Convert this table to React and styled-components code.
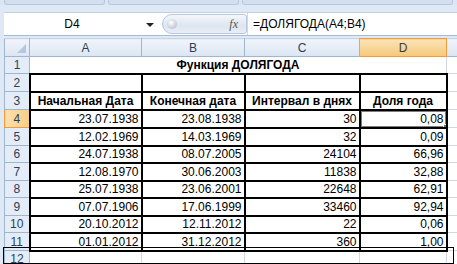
import React from 'react';
import styled, { createGlobalStyle, css } from 'styled-components';

const GlobalStyle = createGlobalStyle`
	html, body {
		margin: 0;
		padding: 0;
		overflow: hidden;
		background: #dfe8f5;
	}
	body {
		font-family: 'Liberation Sans', Arial, sans-serif;
	}
`;

const Window = styled.div`
	position: relative;
	width: 457px;
	height: 264px;
	overflow: hidden;
	background: #dfe8f5;
`;

const RibbonEdge = styled.div`
	display: flex;
	gap: 3px;
	height: 5px;
	padding: 0 4px;
	background: #dbe5f3;
`;

const RibbonGroup = styled.div`
	width: ${(p) => p.w}px;
	height: 4px;
	border: 1px solid #b7c8de;
	border-top: 0;
	border-radius: 0 0 3px 3px;
	background: #d3dfef;
`;

const FormulaBar = styled.div`
	display: flex;
	align-items: center;
	height: 22px;
	margin: 7px 0 2px 4px;
	background: #fff;
	border-top: 1px solid #c3d1e4;
	border-bottom: 1px solid #a9bcd6;
`;

const NameBox = styled.div`
	width: 136px;
	text-align: center;
	font-size: 12px;
	color: #000;
`;

const DropArrow = styled.div`
	width: 0;
	height: 0;
	margin: 1px 8px 0 6px;
	border-left: 4px solid transparent;
	border-right: 4px solid transparent;
	border-top: 4px solid #222;
`;

const FxPill = styled.div`
	display: flex;
	align-items: center;
	justify-content: space-between;
	box-sizing: border-box;
	width: 85px;
	height: 20px;
	padding: 0 8px 0 4px;
	border: 1px solid #b9c7da;
	border-radius: 10px 3px 3px 10px;
	background: linear-gradient(#f4f7fb, #dde5f0 60%, #e9eef5);
`;

const Knob = styled.div`
	width: 10px;
	height: 10px;
	border-radius: 50%;
	background: radial-gradient(circle at 40% 35%, #fff, #c9d0da 60%, #aab3bf);
`;

const Fx = styled.span`
	font-family: 'Liberation Serif', 'Times New Roman', serif;
	font-style: italic;
	font-size: 12px;
	color: #555;
`;

const Formula = styled.div`
	padding-left: 5px;
	font-size: 12px;
	color: #000;
	border-left: 1px solid #d0d9e6;
	height: 100%;
	display: flex;
	align-items: center;
`;

const Sheet = styled.table`
	width: 453px;
	margin-left: 4px;
	border-collapse: collapse;
	table-layout: fixed;
	font-size: 12px;
	background: #fff;
`;

const HeadCell = styled.th`
	padding: 0;
	height: 17px;
	font-weight: normal;
	font-size: 12px;
	text-align: center;
	color: #2c3f58;
	border: 1px solid #9eb6ce;
	border-top: 1px solid #c5d5e8;
	background: linear-gradient(#f1f5fb, #dbe5f2);
	${(p) =>
		p.active &&
		css`
			color: #3b3b3b;
			background: linear-gradient(#fae3b8, #f6c978);
			border-color: #f29b3a;
		`}
`;

const Corner = styled(HeadCell)`
	position: relative;
	&::after {
		content: '';
		position: absolute;
		right: 3px;
		bottom: 3px;
		border-left: 9px solid transparent;
		border-bottom: 9px solid #b6c8de;
	}
`;

const RowHead = styled.th`
	padding: 0;
	font-weight: normal;
	font-size: 12px;
	text-align: center;
	color: #2c3f58;
	border: 1px solid #9eb6ce;
	border-top-color: #c5d5e8;
	background: #e4ecf7;
	${(p) =>
		p.active &&
		css`
			background: linear-gradient(90deg, #fbe0ae, #f7cd85);
			border-color: #f29b3a;
		`}
`;

const Cell = styled.td`
	position: relative;
	padding: 0 2px 1px;
	vertical-align: bottom;
	white-space: nowrap;
	overflow: hidden;
	color: #000;
	text-align: ${(p) => p.align || 'right'};
	font-weight: ${(p) => (p.bold ? 'bold' : 'normal')};
	border: ${(p) => (p.boxed ? '2px solid #000' : '1px solid #d0d7e5')};
`;

const Title = styled(Cell)`
	border-bottom: 2px solid #000;
	text-align: center;
	font-weight: bold;
`;

const Selection = styled.div`
	position: absolute;
	inset: -1px -1px -1px -1px;
	border: 2px solid #7d7d7d;
	pointer-events: none;
	&::after {
		content: '';
		position: absolute;
		right: -4px;
		bottom: -4px;
		width: 4px;
		height: 4px;
		border: 1px solid #fff;
		background: #666;
	}
`;

const CellText = styled.span`
	position: relative;
`;

const Frame = styled.div`
	position: absolute;
	left: 3px;
	top: 247px;
	width: 449px;
	height: 15px;
	border: 1px solid #000;
	pointer-events: none;
`;

const rows = [
	['23.07.1938', '23.08.1938', '30', '0,08'],
	['12.02.1969', '14.03.1969', '32', '0,09'],
	['24.07.1938', '08.07.2005', '24104', '66,96'],
	['12.08.1970', '30.06.2003', '11838', '32,88'],
	['25.07.1938', '23.06.2001', '22648', '62,91'],
	['07.07.1906', '17.06.1999', '33460', '92,94'],
	['20.10.2012', '12.11.2012', '22', '0,06'],
	['01.01.2012', '31.12.2012', '360', '1,00'],
];

const heights = [18, 18, 17, 18, 17, 18, 17, 18];

export default function App() {
	return (
		<Window>
			<GlobalStyle />
			<RibbonEdge>
				<RibbonGroup w={100} />
				<RibbonGroup w={130} />
				<RibbonGroup w={210} />
			</RibbonEdge>
			<FormulaBar>
				<NameBox>D4</NameBox>
				<DropArrow />
				<FxPill>
					<Knob />
					<Fx>fx</Fx>
				</FxPill>
				<Formula>=ДОЛЯГОДА(A4;B4)</Formula>
			</FormulaBar>
			<Sheet>
				<colgroup>
					<col style={{ width: 25 }} />
					<col style={{ width: 112 }} />
					<col style={{ width: 103 }} />
					<col style={{ width: 115 }} />
					<col style={{ width: 87 }} />
					<col style={{ width: 11 }} />
				</colgroup>
				<thead>
					<tr>
						<Corner />
						<HeadCell>A</HeadCell>
						<HeadCell>B</HeadCell>
						<HeadCell>C</HeadCell>
						<HeadCell active>D</HeadCell>
						<HeadCell />
					</tr>
				</thead>
				<tbody>
					<tr style={{ height: 17 }}>
						<RowHead>1</RowHead>
						<Title colSpan={4}>Функция ДОЛЯГОДА</Title>
						<Cell />
					</tr>
					<tr style={{ height: 18 }}>
						<RowHead>2</RowHead>
						<Cell boxed />
						<Cell boxed />
						<Cell boxed />
						<Cell boxed />
						<Cell />
					</tr>
					<tr style={{ height: 18 }}>
						<RowHead>3</RowHead>
						<Cell boxed bold align="center">Начальная Дата</Cell>
						<Cell boxed bold align="center">Конечная дата</Cell>
						<Cell boxed bold align="center">Интервал в днях</Cell>
						<Cell boxed bold align="center">Доля года</Cell>
						<Cell />
					</tr>
					{rows.map((r, i) => (
						<tr key={i} style={{ height: heights[i] }}>
							<RowHead active={i === 0}>{i + 4}</RowHead>
							{r.map((v, j) => (
								<Cell boxed key={j}>
									{i === 0 && j === 3 && <Selection />}
									<CellText>{v}</CellText>
								</Cell>
							))}
							<Cell />
						</tr>
					))}
					<tr style={{ height: 17 }}>
						<RowHead>12</RowHead>
						<Cell />
						<Cell />
						<Cell />
						<Cell />
						<Cell />
					</tr>
				</tbody>
			</Sheet>
			<Frame />
		</Window>
	);
}
